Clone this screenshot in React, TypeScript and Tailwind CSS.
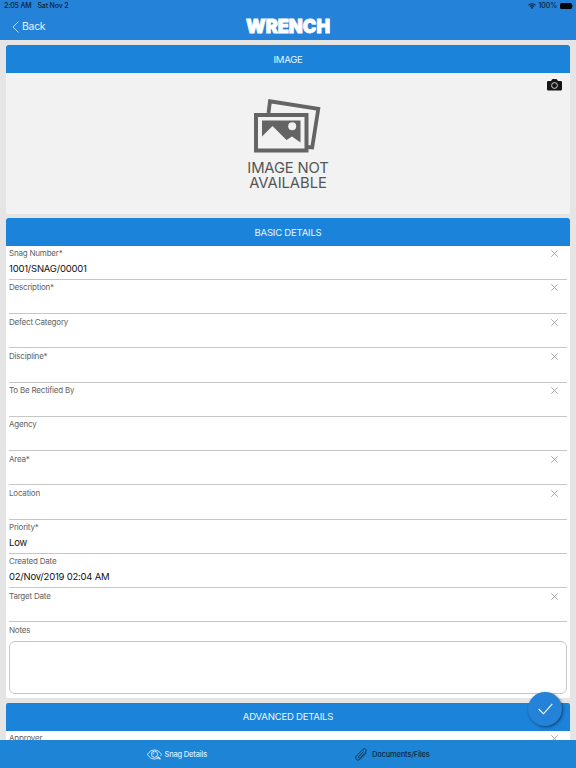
import type { ReactNode } from "react";

type Field = {
  label: string;
  value?: string;
  clearable?: boolean;
};

const basicFields: Field[] = [
  { label: "Snag Number*", value: "1001/SNAG/00001", clearable: true },
  { label: "Description*", clearable: true },
  { label: "Defect Category", clearable: true },
  { label: "Discipline*", clearable: true },
  { label: "To Be Rectified By", clearable: true },
  { label: "Agency" },
  { label: "Area*", clearable: true },
  { label: "Location", clearable: true },
  { label: "Priority*", value: "Low" },
  { label: "Created Date", value: "02/Nov/2019 02:04 AM" },
  { label: "Target Date", clearable: true },
];

function ClearIcon() {
  return (
    <svg viewBox="0 0 7 7" className="mt-[4.500px] mr-[9px] h-[7px] w-[7px] shrink-0" fill="none" stroke="#8b9399" strokeWidth="0.8">
      <path d="M0.3 0.3 6.7 6.7M6.7 0.3 0.3 6.7" />
    </svg>
  );
}

function WifiIcon() {
  return (
    <svg viewBox="0 0 16 12" className="h-[6px] w-[8px]" fill="none" stroke="#0b2238" strokeWidth="2.2">
      <path d="M1 4.4a10 10 0 0 1 14 0M3.8 7.3a6 6 0 0 1 8.4 0" />
      <path d="M8 12 5.6 9.4a3.4 3.4 0 0 1 4.8 0z" fill="#0b2238" stroke="none" />
    </svg>
  );
}

function CameraIcon() {
  return (
    <svg viewBox="0 0 30 24" className="h-[12px] w-[15px]">
      <path d="M2.5 4H8l2-3.2Q10.500 0 11.500 0h7q1 0 1.500.8L22 4h5.500Q30 4 30 6.500v14q0 2.500-2.500 2.500h-25Q0 23 0 20.500v-14Q0 4 2.500 4z" fill="#161616" />
      <circle cx="15" cy="13" r="5.800" fill="none" stroke="#e4e4e4" strokeWidth="1.800" />
    </svg>
  );
}

function PicturesIcon() {
  return (
    <svg viewBox="0 0 67 54" className="mr-[1px] h-[54px] w-[67px]" fill="none" stroke="#646464">
      <path d="M14.500 14 16 2.300 64.300 9.800 58.200 48.500 52 47.800" strokeWidth="3.800" />
      <rect x="2" y="16" width="50.500" height="35.500" strokeWidth="4" fill="#f2f2f2" />
      <path d="M8 21.500h38.500v22l-8.500-6-5.500 3.500L18.500 27 8 37.500z" fill="#646464" stroke="none" />
      <circle cx="38.200" cy="27.200" r="4" fill="#f2f2f2" stroke="none" />
    </svg>
  );
}

function EyeSearchIcon() {
  return (
    <svg viewBox="0 0 30 22" className="h-[11px] w-[15px]" fill="none" stroke="#d3e8fa" strokeWidth="2">
      <path d="M24 17C21 19 18 20 15 20 8.500 20 4 16 1 11 4 6 8.500 2 15 2s11 4 14 9c-.6 1.200-1.300 2.200-2 3" />
      <circle cx="15" cy="10.500" r="6.200" />
      <path d="M12 11a3 3 0 0 1 3-3.400M19.500 15l2 2" />
      <path d="m21.500 15.800 5.500 4.700" strokeWidth="3.200" />
    </svg>
  );
}

function ClipIcon() {
  return (
    <svg viewBox="0 0 24 26" className="h-[13px] w-[12px]" fill="none" stroke="#0c3050" strokeWidth="1.800" strokeLinecap="round">
      <path d="M16.500 7.500 7.300 17.200c-1.600 2 .9 4.200 2.700 2.400L21 8.300c4-4.700-1.500-9.500-5.800-5L3.200 15.800c-4.700 5.300 1.800 11.700 7.300 6.400L22.500 10" />
    </svg>
  );
}

function SectionTitle({ children }: { children: ReactNode }) {
  return (
    <h2 className="flex h-[28px] items-center justify-center rounded-t-[2px] bg-[#1b83d9] pt-[1.500px] text-[9.600px] tracking-[-0.25px] text-[#eaf5ff]">
      {children}
    </h2>
  );
}

function FieldLabel({ children }: { children: ReactNode }) {
  return <div className="pt-[2.500px] text-[8px] leading-[11px] tracking-[-0.2px] text-[#626262]">{children}</div>;
}

function FieldRow({ label, value, clearable }: Field) {
  return (
    <div className="flex h-[34.250px] justify-between border-b border-[#c6c6c6]">
      <div>
        <FieldLabel>{label}</FieldLabel>
        {value && (
          <div className="mt-[2.500px] text-[9.500px] leading-[13px] tracking-[-0.22px] text-[#111]">{value}</div>
        )}
      </div>
      {clearable && <ClearIcon />}
    </div>
  );
}

export default function App() {
  return (
    <div className="relative flex h-[768px] w-[576px] flex-col overflow-hidden bg-[#e5e5e5] font-['Inter',sans-serif]">
      <header className="h-[40px] shrink-0 bg-[#2582d9]">
        <div className="flex h-[12px] items-center justify-between pr-[3px] pl-[4px] text-[7px] font-medium text-[#0b2238]">
          <div className="flex gap-[6px] tracking-[-0.15px]">
            <span>2:05 AM</span>
            <span>Sat Nov 2</span>
          </div>
          <div className="flex items-center gap-[2.500px]">
            <WifiIcon />
            <span className="tracking-[-0.1px]">100%</span>
            <div className="flex items-center gap-[0.500px]">
              <div className="h-[6px] w-[12px] rounded-[1.500px] bg-[#03080d]" />
              <div className="h-[2px] w-px bg-[#174f83]" />
            </div>
          </div>
        </div>
        <div className="grid h-[28px] grid-cols-3 items-center">
          <div className="flex items-center gap-[3px] pt-px pl-[12px] text-[10.500px] tracking-[-0.3px] text-[#e4f1fd]">
            <svg viewBox="0 0 7 12" className="h-[12px] w-[7px]" fill="none" stroke="#cfe5f9" strokeWidth="0.9">
              <path d="M6.500.6 1 6l5.500 5.400" />
            </svg>
            <span>Back</span>
          </div>
          <svg viewBox="0 0 86 24" className="h-[24px] w-[86px] justify-self-center">
            <text x="1" y="18.500" textLength="84" lengthAdjust="spacingAndGlyphs" fontSize="18.800" fontWeight="900" fill="#fff" stroke="#fff" strokeWidth="0.900">
              WRENCH
            </text>
          </svg>
        </div>
      </header>

      <main className="flex min-h-0 flex-1 flex-col gap-[4.500px] overflow-hidden px-[6px] pt-[5px]">
        <section className="shrink-0 overflow-hidden rounded-[2px] bg-[#f2f2f2]">
          <SectionTitle>IMAGE</SectionTitle>
          <div className="relative flex h-[140.500px] flex-col items-center pt-[26px]">
            <PicturesIcon />
            <div className="mt-[8px] flex flex-col items-center text-[14.800px] leading-[14.500px] text-[#555]">
              <span className="tracking-[-0.15px]">IMAGE NOT</span>
              <span className="tracking-[-0.05px]">AVAILABLE</span>
            </div>
            <div className="absolute top-[6px] right-[8px]">
              <CameraIcon />
            </div>
          </div>
        </section>

        <section className="h-[480px] shrink-0 overflow-hidden rounded-[2px] bg-white">
          <SectionTitle>BASIC DETAILS</SectionTitle>
          <div className="-mt-[0.300px] px-[3px]">
            {basicFields.map((field) => (
              <FieldRow key={field.label} {...field} />
            ))}
            <FieldLabel>Notes</FieldLabel>
            <div className="mt-[5.500px] h-[53px] rounded-[6px] border border-[#c6c6c6]" />
          </div>
        </section>

        <section className="shrink-0 rounded-[2px] bg-white">
          <SectionTitle>ADVANCED DETAILS</SectionTitle>
          <div className="-mt-[0.500px] px-[3px]">
            <FieldRow label="Approver" clearable />
          </div>
        </section>
      </main>

      <nav className="grid h-[28.500px] shrink-0 grid-cols-2 bg-[#1e85d6] pt-px text-[7.500px] font-medium tracking-[-0.18px]">
        <div className="flex items-center gap-[3px] pl-[146.500px] text-[#dceefd]">
          <EyeSearchIcon />
          <span>Snag Details</span>
        </div>
        <div className="flex items-center gap-[5px] pl-[67px] text-[#0c2b48]">
          <ClipIcon />
          <span>Documents/Files</span>
        </div>
      </nav>

      <button className="absolute top-[692px] left-[528px] flex h-[34px] w-[34px] items-center justify-center rounded-full bg-[#2582d9] shadow-[1px_1px_3px_rgba(0,0,0,0.5)]">
        <svg viewBox="0 0 15 12" className="h-[12px] w-[15px]" fill="none" stroke="#fff" strokeWidth="1.100">
          <path d="M.7 6 5.500 10.800 14.300.8" />
        </svg>
      </button>
    </div>
  );
}
